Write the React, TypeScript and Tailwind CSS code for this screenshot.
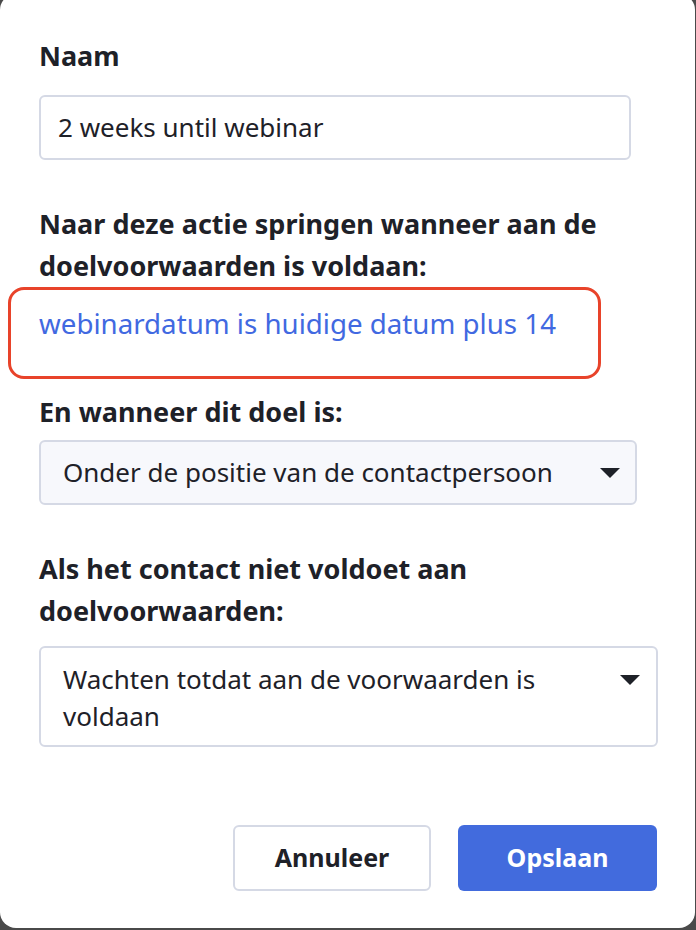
import * as React from "react";

/* Small filled caret used by the two select boxes */
function Caret() {
  return (
    <svg width="20" height="10" viewBox="0 0 20 10" className="shrink-0">
      <polygon points="0,0 20,0 10,10" fill="#1e2128" />
    </svg>
  );
}

export default function App() {
  return (
    <div className="w-[696px] h-[930px] overflow-hidden bg-[#4a4a4a] font-['Noto_Sans','Open_Sans',sans-serif] text-[#1e2128]">
      <div className="mt-[-6px] w-[695px] h-[934px] rounded-[16px] bg-white pt-[41px] pl-[39px]">
        {/* Naam */}
        <div className="text-[27px] leading-[42px] font-bold">Naam</div>
        <div className="mt-[18px] w-[592px] h-[65px] rounded-[6px] border-2 border-[#d5d9e5] flex items-center pl-[17px] text-[26px]">
          2 weeks until webinar
        </div>

        {/* Goal target */}
        <div className="mt-[43px] w-[598px] text-[27px] leading-[42px] font-bold">
          Naar deze actie springen wanneer aan de doelvoorwaarden is voldaan:
        </div>
        <div className="-ml-[31px] w-[593px] h-[92px] rounded-[16px] border-[3px] border-[#e8432a] pl-[28px] pt-[12px]">
          <span className="text-[27.7px] leading-[42px] text-[#4169e1]">
            webinardatum is huidige datum plus 14
          </span>
        </div>

        {/* Position */}
        <div className="mt-[12px] text-[27px] leading-[42px] font-bold">En wanneer dit doel is:</div>
        <div className="mt-[7px] w-[598px] h-[65px] rounded-[6px] border-2 border-[#d5d9e5] bg-[#f7f8fc] flex items-center justify-between pl-[22px] pr-[15px] text-[26px]">
          <span>Onder de positie van de contactpersoon</span>
          <Caret />
        </div>

        {/* Fallback */}
        <div className="mt-[43px] w-[598px] text-[27px] leading-[42px] font-bold">
          Als het contact niet voldoet aan doelvoorwaarden:
        </div>
        <div className="mt-[14px] w-[619px] h-[101px] rounded-[6px] border-2 border-[#d5d9e5] bg-white flex items-start justify-between pl-[22px] pr-[16px] pt-[13px] text-[26px]">
          <span className="w-[540px] leading-[37px]">Wachten totdat aan de voorwaarden is voldaan</span>
          <div className="mt-[14px]">
            <Caret />
          </div>
        </div>

        {/* Actions */}
        <div className="mt-[78px] w-[618px] flex justify-end gap-[27px]">
          <button className="w-[198px] h-[66px] rounded-[6px] border-2 border-[#d5d9e5] bg-white text-[25px] font-bold text-[#1e2128]">
            Annuleer
          </button>
          <button className="w-[199px] h-[66px] rounded-[6px] bg-[#426bdd] text-[25px] font-bold text-white">
            Opslaan
          </button>
        </div>
      </div>
    </div>
  );
}
